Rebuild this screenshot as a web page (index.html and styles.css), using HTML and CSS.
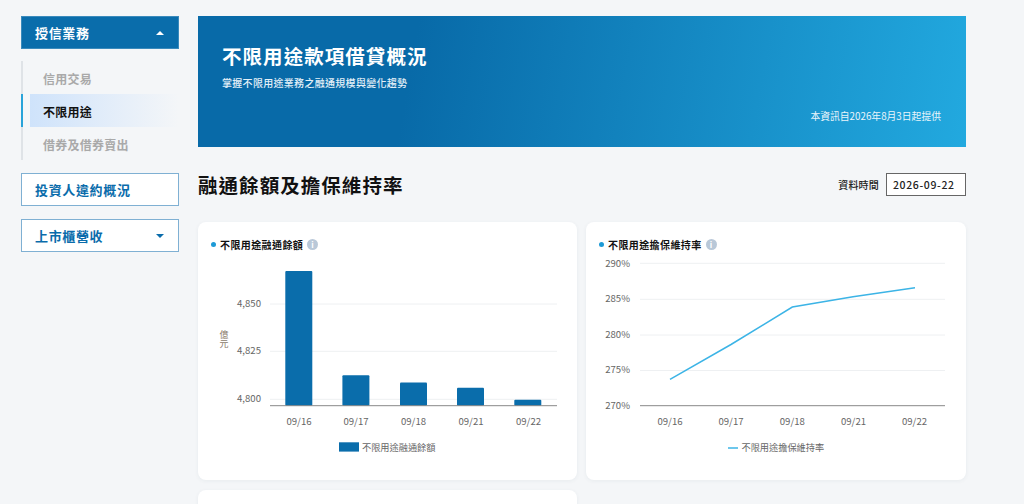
FILE: index.html
```html
<!DOCTYPE html>
<html lang="zh-Hant">
<head>
<meta charset="utf-8">
<title>不限用途款項借貸概況</title>
<link rel="stylesheet" href="styles.css">
</head>
<body>
<div class="page">
  <nav class="sidebar">
    <div class="nav-group">
      <div class="nav-btn nav-btn-active"><span>授信業務</span><i class="caret caret-up"></i></div>
      <ul class="subnav">
        <li class="subnav-item">信用交易</li>
        <li class="subnav-item subnav-item-active">不限用途</li>
        <li class="subnav-item">借券及借券賣出</li>
      </ul>
    </div>
    <div class="nav-btn"><span>投資人違約概況</span></div>
    <div class="nav-btn"><span>上市櫃營收</span><i class="caret caret-down"></i></div>
  </nav>
  <main class="main">
    <header class="banner">
      <div>
        <h1 class="banner-title">不限用途款項借貸概況</h1>
        <p class="banner-sub">掌握不限用途業務之融通規模與變化趨勢</p>
      </div>
      <p class="banner-note">本資訊自2026年8月3日起提供</p>
    </header>
    <div class="section-head">
      <h2 class="section-title">融通餘額及擔保維持率</h2>
      <div class="date-field">
        <span class="date-label">資料時間</span>
        <span class="date-box">2026-09-22</span>
      </div>
    </div>
    <div class="cards">
      <section class="card">
        <h3 class="card-title"><i class="dot"></i><span>不限用途融通餘額</span><i class="info">i</i></h3>
        <svg class="chart" viewBox="198 254 379 226" aria-label="不限用途融通餘額">
          <g class="grid">
            <line x1="270" x2="557" y1="304" y2="304"/>
            <line x1="270" x2="557" y1="351.3" y2="351.3"/>
            <line x1="270" x2="557" y1="399.3" y2="399.3"/>
          </g>
          <g class="bars">
            <rect x="285.3" y="271" width="27" height="134.7" rx="1"/>
            <rect x="342.4" y="375.3" width="27" height="30.4" rx="1"/>
            <rect x="400" y="382.4" width="27" height="23.3" rx="1"/>
            <rect x="457" y="387.7" width="27" height="18" rx="1"/>
            <rect x="514.3" y="399.7" width="27" height="6" rx="1"/>
          </g>
          <line class="axis" x1="270" x2="557" y1="405.7" y2="405.7"/>
          <g class="tick tick-end">
            <text x="261" y="306.5">4,850</text>
            <text x="261" y="354">4,825</text>
            <text x="261" y="401.5">4,800</text>
          </g>
          <g class="tick tick-mid">
            <text x="299" y="425">09/16</text>
            <text x="356" y="425">09/17</text>
            <text x="413.5" y="425">09/18</text>
            <text x="471" y="425">09/21</text>
            <text x="528.5" y="425">09/22</text>
          </g>
          <text class="unit" x="224" y="339">億元</text>
          <rect class="bars" x="339" y="442.3" width="20" height="9.3"/>
          <text class="legend" x="362" y="451">不限用途融通餘額</text>
        </svg>
      </section>
      <section class="card">
        <h3 class="card-title"><i class="dot"></i><span>不限用途擔保維持率</span><i class="info">i</i></h3>
        <svg class="chart" viewBox="586 254 380 226" aria-label="不限用途擔保維持率">
          <g class="grid">
            <line x1="640" x2="945" y1="263.3" y2="263.3"/>
            <line x1="640" x2="945" y1="299.3" y2="299.3"/>
            <line x1="640" x2="945" y1="335" y2="335"/>
            <line x1="640" x2="945" y1="370.5" y2="370.5"/>
          </g>
          <line class="axis" x1="640" x2="945" y1="405.7" y2="405.7"/>
          <polyline class="trend" points="670,379.3 731,344.5 792.3,307 853,296.7 915,287.7"/>
          <g class="tick tick-end">
            <text x="630" y="266.5">290%</text>
            <text x="630" y="302">285%</text>
            <text x="630" y="337.5">280%</text>
            <text x="630" y="373">275%</text>
            <text x="630" y="408.5">270%</text>
          </g>
          <g class="tick tick-mid">
            <text x="670" y="425">09/16</text>
            <text x="731" y="425">09/17</text>
            <text x="792.3" y="425">09/18</text>
            <text x="853.5" y="425">09/21</text>
            <text x="914.5" y="425">09/22</text>
          </g>
          <line class="trend" x1="728" x2="738" y1="448" y2="448"/>
          <text class="legend" x="741.5" y="451">不限用途擔保維持率</text>
        </svg>
      </section>
      <section class="card"></section>
    </div>
  </main>
</div>
</body>
</html>
```
FILE: styles.css
```css
* { box-sizing: border-box; }
html, body { margin: 0; height: 504px; overflow: hidden; }
body {
  background: #f4f6f8;
  color: #111;
  font-family: "Noto Sans CJK TC", "Noto Sans", sans-serif;
}
h1, h2, h3, p, ul { margin: 0; padding: 0; }
.page {
  display: flex;
  gap: 19px;
  align-items: flex-start;
  padding: 16px 0 0 21px;
}
.sidebar {
  width: 158px;
  flex: none;
  display: flex;
  flex-direction: column;
  gap: 13px;
}
.nav-btn {
  height: 33px;
  padding: 0 14px 0 13px;
  display: flex;
  align-items: center;
  justify-content: space-between;
  background: #fff;
  border: 1px solid #7fb0d3;
  color: #0a6cab;
  font-size: 13px;
  font-weight: 700;
  letter-spacing: .05em;
}
.nav-btn-active {
  background: #0a6dab;
  border-color: #3a8abc;
  color: #fff;
}
.caret {
  width: 0;
  height: 0;
  border-left: 4px solid transparent;
  border-right: 4px solid transparent;
}
.caret-up { border-bottom: 4px solid #fff; }
.caret-down { border-top: 4px solid #0a6cab; }
.subnav {
  list-style: none;
  margin-top: 12px;
  border-left: 2px solid #dfe3e7;
}
.subnav-item {
  height: 33px;
  margin-left: -2px;
  padding: 1px 0 0 20px;
  display: flex;
  align-items: center;
  border-left: 2px solid transparent;
  color: #a9a9a9;
  font-size: 12px;
  font-weight: 700;
  letter-spacing: .02em;
}
.subnav-item-active {
  position: relative;
  border-left-color: #29a3d9;
  color: #111;
}
.subnav-item-active::before {
  content: "";
  position: absolute;
  z-index: -1;
  inset: 0 0 0 7px;
  background: linear-gradient(90deg, #cfe3fb, #f4f6f8);
}
.main { width: 768px; flex: none; }
.banner {
  height: 131px;
  padding: 26px 25px 24px 24px;
  display: flex;
  flex-direction: column;
  justify-content: space-between;
  background: linear-gradient(100deg, #086aa8 28%, #22a9df 100%);
  color: #fff;
}
.banner-title {
  font-size: 19.5px;
  line-height: 28px;
  font-weight: 700;
  letter-spacing: 1.05px;
}
.banner-sub {
  margin-top: 5px;
  font-size: 10px;
  line-height: 16px;
  font-weight: 500;
  letter-spacing: .03em;
  color: #e4f0f8;
}
.banner-note {
  font-size: 9.8px;
  line-height: 14px;
  text-align: right;
  color: #eaf5fb;
}
.section-head {
  height: 75px;
  padding: 26px 0;
  display: flex;
  align-items: center;
  justify-content: space-between;
}
.section-title {
  font-size: 19.5px;
  line-height: 28px;
  font-weight: 700;
  letter-spacing: 1.05px;
}
.date-field { display: flex; align-items: center; gap: 7px; }
.date-label { font-size: 10px; font-weight: 500; letter-spacing: .02em; color: #222; }
.date-box {
  width: 80px;
  height: 23px;
  padding-left: 6px;
  display: flex;
  align-items: center;
  background: #fff;
  border: 1px solid #666;
  font-size: 10.5px;
  font-weight: 500;
  letter-spacing: .06em;
  color: #222;
}
.cards {
  display: grid;
  grid-template-columns: 379px 380px;
  gap: 10px 9px;
}
.card {
  height: 258px;
  background: #fff;
  border-radius: 8px;
  box-shadow: 0 1px 4px rgba(40, 60, 80, .06);
}
.card-title {
  height: 32px;
  padding: 12px 0 0 13px;
  display: flex;
  align-items: center;
  gap: 4px;
  font-size: 10px;
  font-weight: 700;
  letter-spacing: .04em;
}
.dot { width: 5px; height: 5px; border-radius: 50%; background: #1d9ad6; }
.info {
  width: 11px;
  height: 11px;
  border-radius: 50%;
  background: #b9c8d8;
  color: #fff;
  font-size: 8px;
  font-style: normal;
  line-height: 11px;
  text-align: center;
}
.chart { display: block; width: 100%; height: 226px; }
.grid line { stroke: #eef0f2; stroke-width: 1; }
.axis { stroke: #888; stroke-width: 1; }
.bars { fill: #0a6dab; }
.trend { fill: none; stroke: #3cb4e6; stroke-width: 1.5; }
.tick text { font-size: 9.6px; fill: #666; }
.tick-end text { text-anchor: end; }
.tick-mid text { text-anchor: middle; }
.legend { font-size: 9.2px; fill: #666; }
.unit { font-size: 9px; fill: #8a7a6a; text-anchor: middle; writing-mode: vertical-rl; }
```
